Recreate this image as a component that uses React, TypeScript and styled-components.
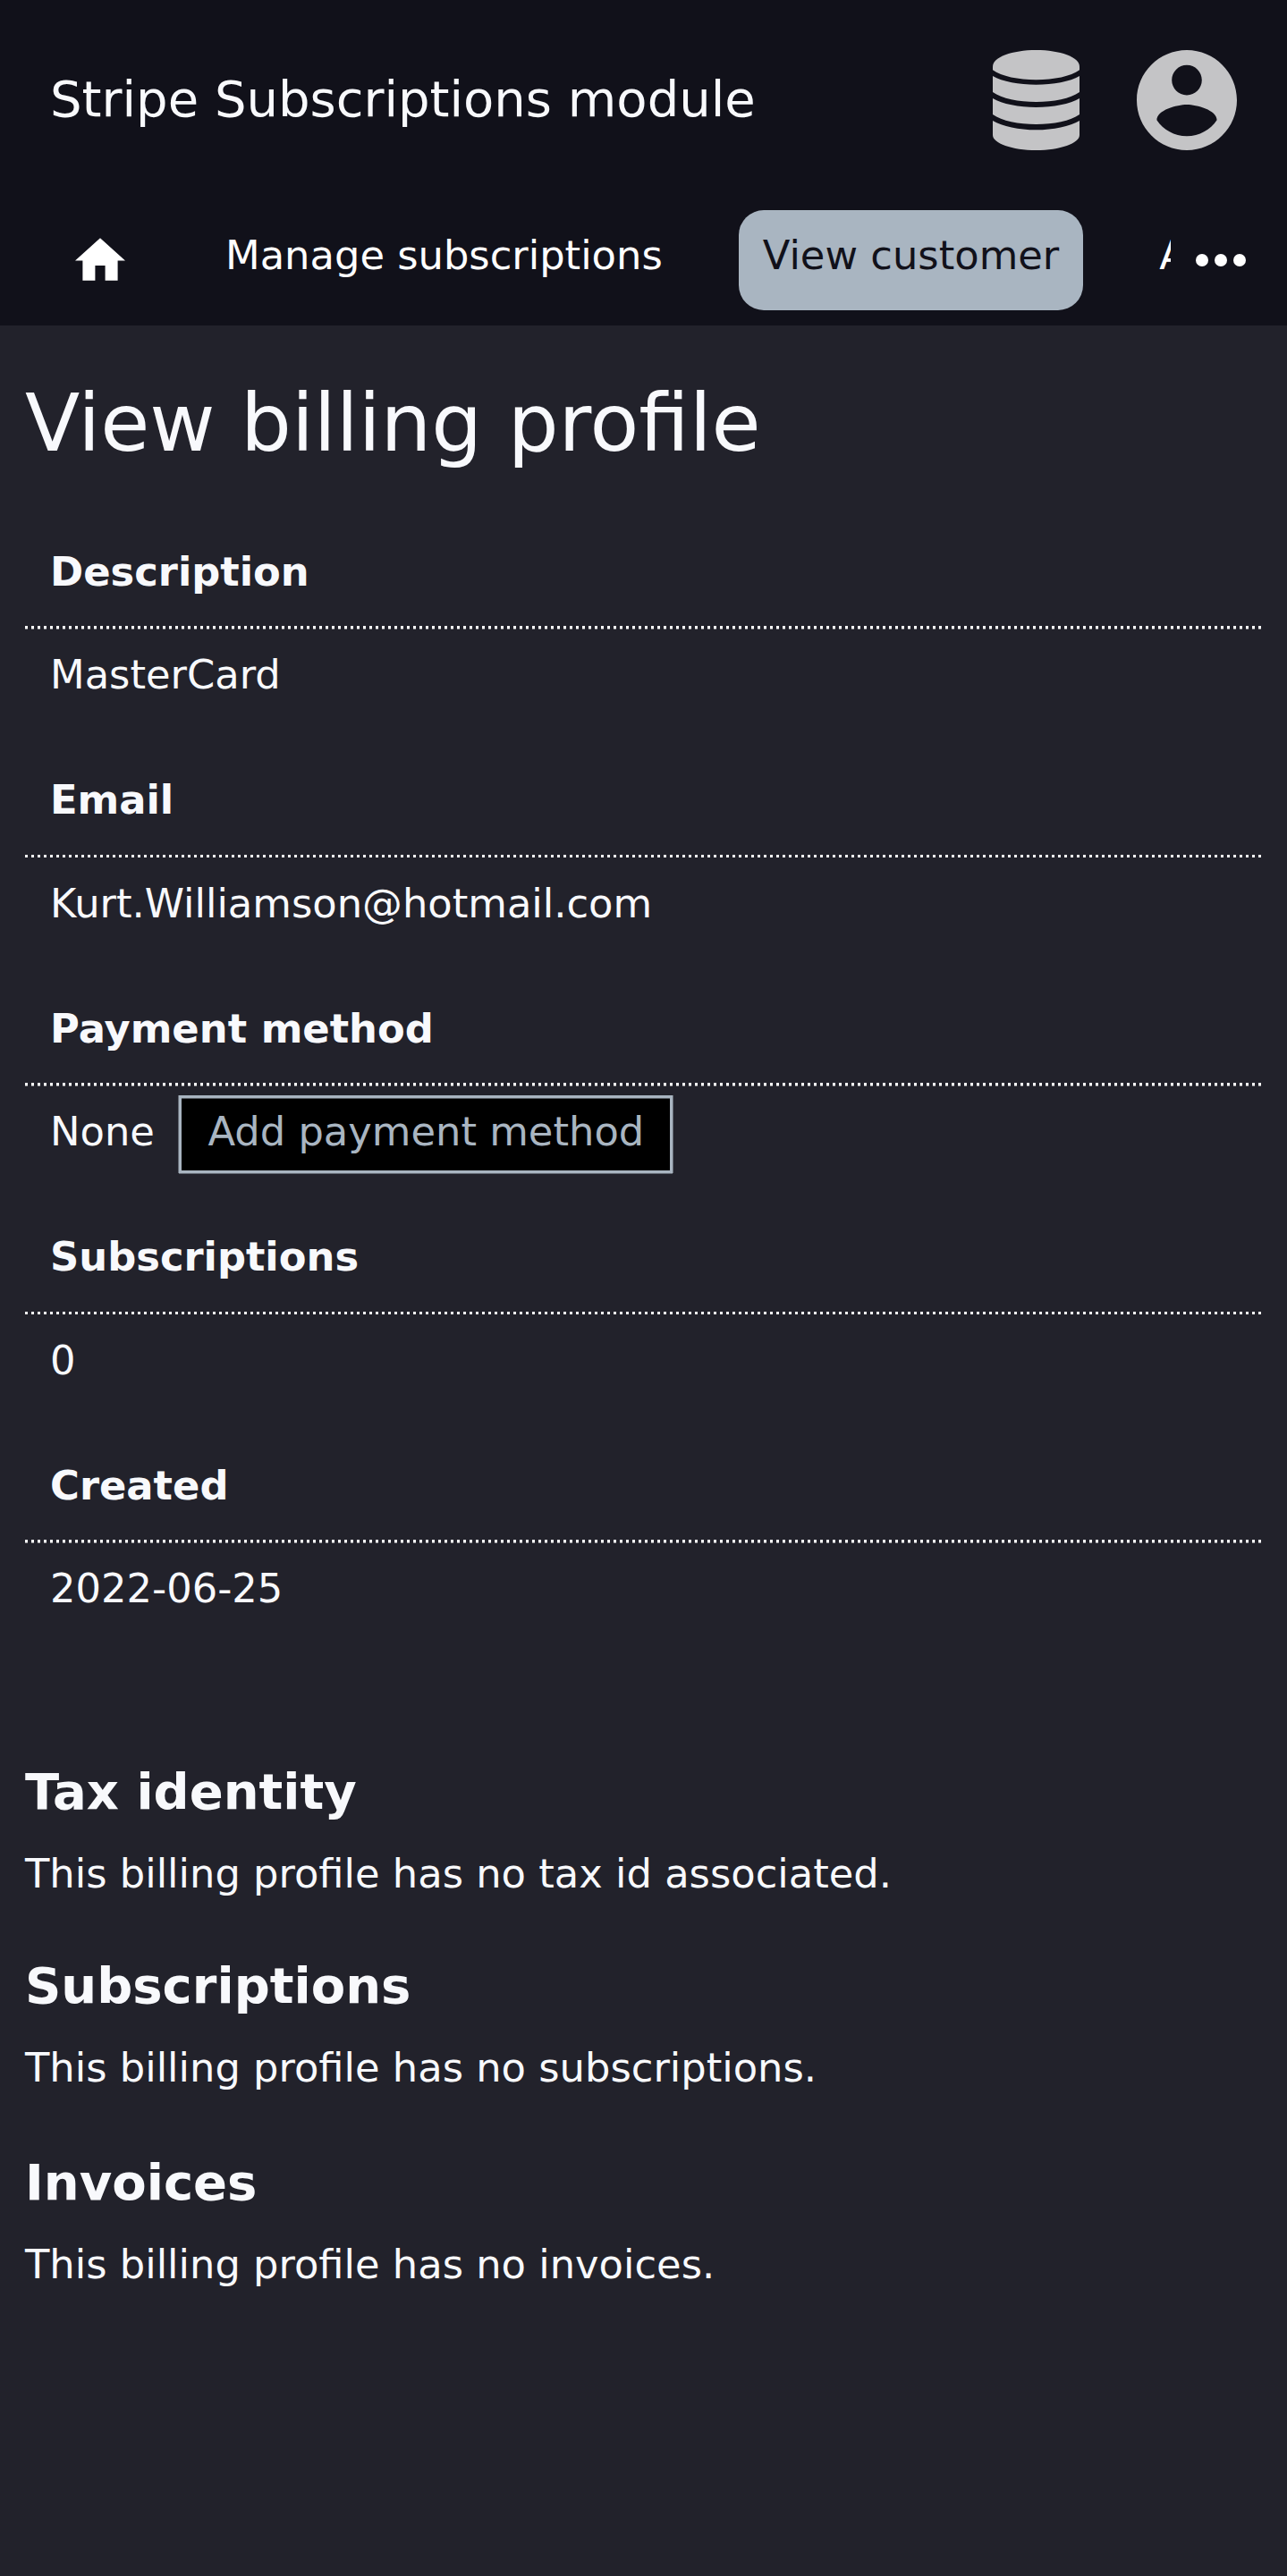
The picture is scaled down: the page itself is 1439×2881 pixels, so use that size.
import React from 'react';
import styled, { createGlobalStyle } from 'styled-components';

const GlobalStyle = createGlobalStyle`
  * { box-sizing: border-box; }
  body {
    margin: 0;
    background: #22222b;
    color: #f8f9fc;
    font: 44.8px/53px "DejaVu Sans", sans-serif;
  }
`;

const Page = styled.div`
  min-height: 2881px;
  overflow: hidden;
`;

const Header = styled.header`
  height: 364px;
  background: #11111a;
`;

const TitleBar = styled.div`
  display: flex;
  align-items: center;
  height: 224px;
  padding: 0 56px;
`;

const AppTitle = styled.div`
  flex: 1;
  font-size: 56px;
  line-height: 65px;
  padding-bottom: 3px;
`;

const HeaderIcon = styled.svg<{ $w: number }>`
  display: block;
  flex: none;
  width: ${(p) => p.$w}px;
  height: 112px;
  margin-left: 64px;
  fill: #c4c4c6;
`;

const Nav = styled.nav`
  display: flex;
  height: 140px;
  padding: 10.5px 46px 17.5px 56px;
`;

const NavItems = styled.div`
  display: flex;
  width: 1253px;
  overflow: hidden;
`;

const NavItem = styled.a<{ $active?: boolean }>`
  flex: none;
  height: 112px;
  margin-right: 58px;
  padding: 24.5px 27px 0;
  border-radius: 28px;
  white-space: nowrap;
  color: ${(p) => (p.$active ? '#11111a' : '#fff')};
  background: ${(p) => (p.$active ? '#a9b5c1' : 'transparent')};
`;

const HomeIcon = styled.svg`
  display: block;
  width: 56px;
  height: 48px;
  margin: 7px 0 0 1px;
  fill: #fff;
`;

const MoreIcon = styled.svg`
  display: block;
  width: 56px;
  height: 14px;
  margin: 49px 0 0 28px;
  fill: #fff;
`;

const Main = styled.main`
  padding: 57px 28px 0;
`;

const PageTitle = styled.h1`
  margin: 0;
  font-size: 89.6px;
  font-weight: 400;
  line-height: 104px;
`;

const Details = styled.dl`
  margin: 55px 0 0;
`;

const Term = styled.dt`
  height: 123.5px;
  padding: 32.75px 28px 0;
  font-weight: 700;
  background: repeating-linear-gradient(to right, #fff 0 3.5px, transparent 3.5px 7px) 0 100% / 100% 3.5px no-repeat;
`;

const Value = styled.dd`
  display: flex;
  align-items: flex-start;
  height: 132px;
  margin: 0;
  padding: 10.5px 28px 0;
`;

const ValueText = styled.span`
  padding-top: 14px;
`;

const Action = styled.a`
  width: 552px;
  height: 87px;
  margin-left: 27px;
  padding: 11px 0 0 29.6px;
  border: 3px solid #a9b5c1;
  box-shadow: -1px 0 0 #666c76, 1px 0 0 #666c76, 0 1px 0 #666c76, inset 0 1px 0 #555b61;
  background: #000;
  color: #a9b5c1;
  white-space: nowrap;
`;

const Sections = styled.div`
  padding-top: 113.25px;
`;

const Section = styled.section<{ $gap: number }>`
  margin-bottom: ${(p) => p.$gap}px;
`;

const SectionTitle = styled.h2`
  margin: 0;
  font-size: 56px;
  line-height: 65px;
`;

const SectionText = styled.p`
  margin: 33px 0 0;
`;

const details: { term: string; value: string; action?: string }[] = [
  { term: 'Description', value: 'MasterCard' },
  { term: 'Email', value: 'Kurt.Williamson@hotmail.com' },
  { term: 'Payment method', value: 'None', action: 'Add payment method' },
  { term: 'Subscriptions', value: '0' },
  { term: 'Created', value: '2022-06-25' },
];

const sections = [
  { title: 'Tax identity', text: 'This billing profile has no tax id associated.', gap: 66 },
  { title: 'Subscriptions', text: 'This billing profile has no subscriptions.', gap: 69.5 },
  { title: 'Invoices', text: 'This billing profile has no invoices.', gap: 0 },
];

export default function App() {
  return (
    <>
      <GlobalStyle />
      <Page>
        <Header>
          <TitleBar>
            <AppTitle>Stripe Subscriptions module</AppTitle>
            <HeaderIcon $w={97} viewBox="0 0 291 336" preserveAspectRatio="none">
              <path d="M0 55C0 24 65 0 145.500 0S291 24 291 55v12C262 88 205 100 145.500 100S29 88 0 67z" />
              <path d="M0 87c32 19 88 29 145.500 29S259 106 291 87v54c-30 22-88 33-145.500 33S30 163 0 141z" />
              <path d="M0 162c32 19 88 30 145.500 30S259 181 291 162v54c-30 22-88 33-145.500 33S30 238 0 216z" />
              <path d="M0 237c32 19 88 31 145.500 31S259 256 291 237v48c0 28-65 51-145.500 51S0 313 0 285z" />
            </HeaderIcon>
            <HeaderIcon $w={112} viewBox="2 2 20 20">
              <path d="M12 2C6.480 2 2 6.480 2 12s4.480 10 10 10 10-4.480 10-10S17.520 2 12 2zm0 3c1.660 0 3 1.340 3 3s-1.340 3-3 3-3-1.340-3-3 1.340-3 3-3zm0 14.200c-2.500 0-4.710-1.280-6-3.220.03-1.990 4-3.080 6-3.080 1.990 0 5.970 1.090 6 3.080-1.290 1.940-3.500 3.220-6 3.220z" />
            </HeaderIcon>
          </TitleBar>
          <Nav>
            <NavItems>
              <NavItem>
                <HomeIcon viewBox="2 3 20 17">
                  <path d="M10 20v-6h4v6h5v-8h3L12 3 2 12h3v8z" />
                </HomeIcon>
              </NavItem>
              <NavItem>Manage subscriptions</NavItem>
              <NavItem $active>View customer</NavItem>
              <NavItem>A</NavItem>
            </NavItems>
            <MoreIcon viewBox="0 0 56 14">
              <circle cx="7" cy="7" r="7" />
              <circle cx="28" cy="7" r="7" />
              <circle cx="49" cy="7" r="7" />
            </MoreIcon>
          </Nav>
        </Header>
        <Main>
          <PageTitle>View billing profile</PageTitle>
          <Details>
            {details.map((d) => (
              <React.Fragment key={d.term}>
                <Term>{d.term}</Term>
                <Value>
                  <ValueText>{d.value}</ValueText>
                  {d.action && <Action>{d.action}</Action>}
                </Value>
              </React.Fragment>
            ))}
          </Details>
          <Sections>
            {sections.map((s) => (
              <Section key={s.title} $gap={s.gap}>
                <SectionTitle>{s.title}</SectionTitle>
                <SectionText>{s.text}</SectionText>
              </Section>
            ))}
          </Sections>
        </Main>
      </Page>
    </>
  );
}
